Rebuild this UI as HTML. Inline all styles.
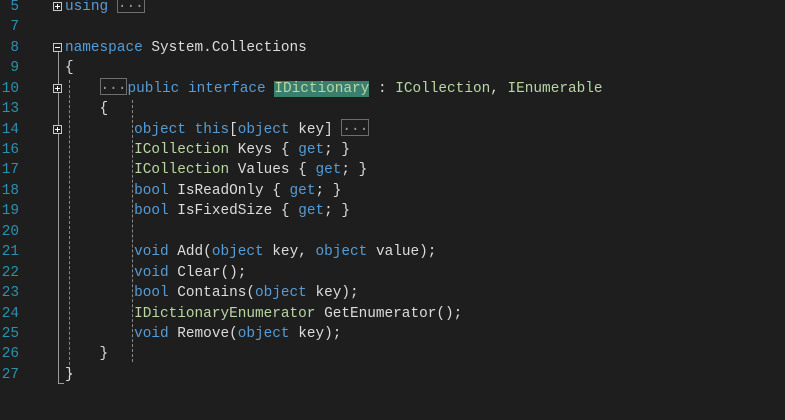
<!DOCTYPE html><html><head><style>
body{margin:0;background:#1e1e1e;width:785px;height:420px;overflow:hidden;position:relative;font-family:"Liberation Mono",monospace;font-size:14.4px}
.l{position:absolute;left:0;height:20.45px;line-height:20.45px;white-space:pre;color:#dcdcdc}
.n{position:absolute;left:0;width:19px;text-align:right;color:#2b91af}
.c{position:absolute;left:65px}
.k{color:#569cd6}.t{color:#b8d7a3}
.box{display:inline-block;border:1px solid #6e6e6e;color:#9a9a9a;line-height:15px;height:15px;vertical-align:middle;margin-top:-3px}
.hl{background:#3a7f6e;color:#b8d7a3}
.o{position:absolute;left:53px;width:9px;height:9px;border:1px solid #c8c8c8;box-sizing:border-box;background:#1e1e1e}
.o:before{content:"";position:absolute;left:1px;top:3px;width:5px;height:1px;background:#fff}
.o.pl:after{content:"";position:absolute;left:3px;top:1px;width:1px;height:5px;background:#fff}
.vl{position:absolute;width:0}
</style></head><body>
<div class="vl" style="left:58px;top:52px;height:332px;border-left:1px solid #9a9a9a"></div>
<div class="vl" style="left:58px;top:383px;width:6px;border-top:1px solid #9a9a9a"></div>
<div class="vl" style="left:69px;top:80px;height:300px;border-left:1px dashed #888"></div>
<div class="vl" style="left:132px;top:100px;height:262px;border-left:1px dashed #888"></div>
<div class="o pl" style="top:2px"></div>
<div class="o" style="top:43px"></div>
<div class="o pl" style="top:84px"></div>
<div class="o pl" style="top:125px"></div>

<div class="l" style="top:-3.2px"><span class="n">5</span><span class="c"><span class="k">using</span> <span class="box">...</span></span></div>
<div class="l" style="top:17.25px"><span class="n">7</span></div>
<div class="l" style="top:37.7px"><span class="n">8</span><span class="c"><span class="k">namespace</span> System.Collections</span></div>
<div class="l" style="top:58.15px"><span class="n">9</span><span class="c">{</span></div>
<div class="l" style="top:78.6px"><span class="n">10</span><span class="c">    <span class="box">...</span><span class="k">public</span> <span class="k">interface</span> <span class="hl">IDictionary</span> : <span class="t">ICollection</span>, <span class="t">IEnumerable</span></span></div>
<div class="l" style="top:99.05px"><span class="n">13</span><span class="c">    {</span></div>
<div class="l" style="top:119.5px"><span class="n">14</span><span class="c">        <span class="k">object</span> <span class="k">this</span>[<span class="k">object</span> key] <span class="box">...</span></span></div>
<div class="l" style="top:139.95px"><span class="n">16</span><span class="c">        <span class="t">ICollection</span> Keys { <span class="k">get</span>; }</span></div>
<div class="l" style="top:160.4px"><span class="n">17</span><span class="c">        <span class="t">ICollection</span> Values { <span class="k">get</span>; }</span></div>
<div class="l" style="top:180.85px"><span class="n">18</span><span class="c">        <span class="k">bool</span> IsReadOnly { <span class="k">get</span>; }</span></div>
<div class="l" style="top:201.3px"><span class="n">19</span><span class="c">        <span class="k">bool</span> IsFixedSize { <span class="k">get</span>; }</span></div>
<div class="l" style="top:221.75px"><span class="n">20</span></div>
<div class="l" style="top:242.2px"><span class="n">21</span><span class="c">        <span class="k">void</span> Add(<span class="k">object</span> key, <span class="k">object</span> value);</span></div>
<div class="l" style="top:262.65px"><span class="n">22</span><span class="c">        <span class="k">void</span> Clear();</span></div>
<div class="l" style="top:283.1px"><span class="n">23</span><span class="c">        <span class="k">bool</span> Contains(<span class="k">object</span> key);</span></div>
<div class="l" style="top:303.55px"><span class="n">24</span><span class="c">        <span class="t">IDictionaryEnumerator</span> GetEnumerator();</span></div>
<div class="l" style="top:324px"><span class="n">25</span><span class="c">        <span class="k">void</span> Remove(<span class="k">object</span> key);</span></div>
<div class="l" style="top:344.45px"><span class="n">26</span><span class="c">    }</span></div>
<div class="l" style="top:364.9px"><span class="n">27</span><span class="c">}</span></div>
</body></html>
